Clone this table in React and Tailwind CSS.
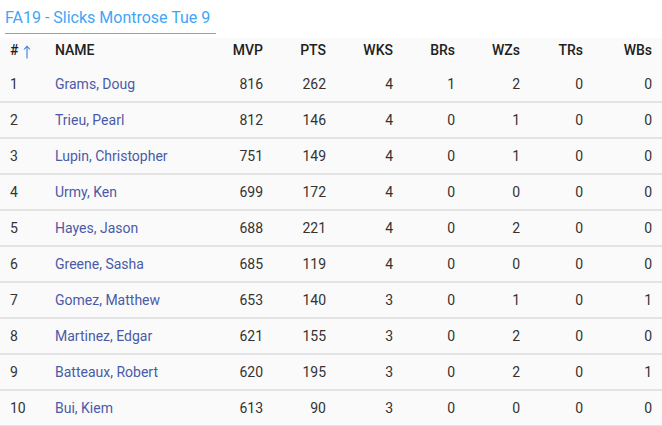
import React from "react";

const rows = [
  [1, "Grams, Doug", 816, 262, 4, 1, 2, 0, 0],
  [2, "Trieu, Pearl", 812, 146, 4, 0, 1, 0, 0],
  [3, "Lupin, Christopher", 751, 149, 4, 0, 1, 0, 0],
  [4, "Urmy, Ken", 699, 172, 4, 0, 0, 0, 0],
  [5, "Hayes, Jason", 688, 221, 4, 0, 2, 0, 0],
  [6, "Greene, Sasha", 685, 119, 4, 0, 0, 0, 0],
  [7, "Gomez, Matthew", 653, 140, 3, 0, 1, 0, 1],
  [8, "Martinez, Edgar", 621, 155, 3, 0, 2, 0, 0],
  [9, "Batteaux, Robert", 620, 195, 3, 0, 2, 0, 1],
  [10, "Bui, Kiem", 613, 90, 3, 0, 0, 0, 0],
];

const cols = ["MVP", "PTS", "WKS", "BRs", "WZs", "TRs", "WBs"];

const grid =
  "grid grid-cols-[55px_148px_60px_63px_67px_62px_65px_63px_69px] pr-[10px] items-center";

export default function App() {
  return (
    <div className="w-[662px] h-[426px] bg-white overflow-hidden font-['Roboto',sans-serif] text-[14px]">
      <div className="h-[38px] pl-[5px] pt-[6px]">
        <div className="w-[211px] border-b border-[#9e9e9e] pb-[3px] text-[16px] leading-[24px] text-[#42a5f5]">
          FA19 - Slicks Montrose Tue 9
        </div>
      </div>
      <div className="bg-[#fafafa]">
        <div className={`${grid} h-[29px] pb-[4px] font-medium text-[#212121]`}>
          <div className="pl-[10px] flex items-center gap-[5px]">
            <span>#</span>
            <svg width="8" height="14" viewBox="0 0 8 14" className="mt-[2px]">
              <path
                d="M4 13.5V1.5M1 4.5L4 1.2L7 4.5"
                fill="none"
                stroke="#3b7fd6"
                strokeWidth="1.1"
              />
            </svg>
          </div>
          <div>NAME</div>
          {cols.map((c) => (
            <div key={c} className="text-right">
              {c}
            </div>
          ))}
        </div>
        {rows.map((r) => (
          <div
            key={r[0]}
            className={`${grid} h-[36px] border-b-2 border-[#e3e3e3] text-[#333]`}
          >
            <div className="pl-[10px]">{r[0]}</div>
            <div className="text-[#4a5aa8]">{r[1]}</div>
            {r.slice(2).map((v, i) => (
              <div key={i} className="text-right">
                {v}
              </div>
            ))}
          </div>
        ))}
      </div>
    </div>
  );
}
